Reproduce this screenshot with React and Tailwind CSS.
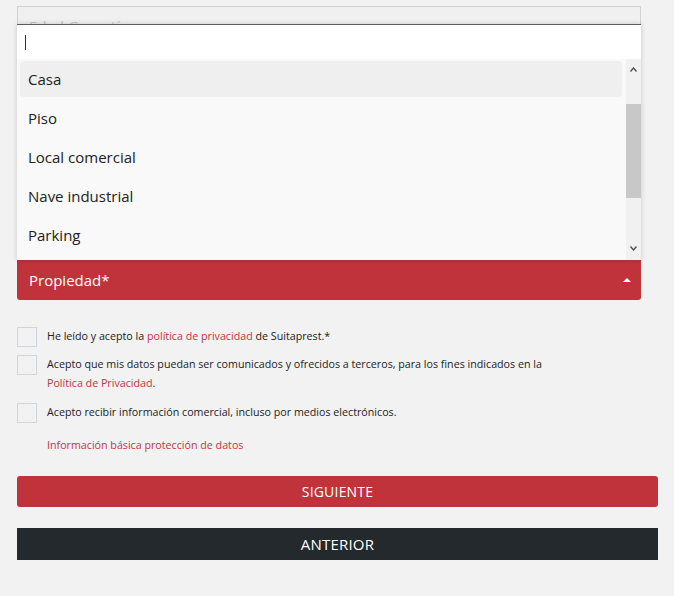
import React from "react";

const options = ["Casa", "Piso", "Local comercial", "Nave industrial", "Parking"];

function Chevron({ up }) {
  return (
    <svg width="7" height="5" viewBox="0 0 7 5" className="block">
      <path
        d={up ? "M0.5 4.5 L3.5 1 L6.5 4.5" : "M0.5 0.5 L3.5 4 L6.5 0.5"}
        fill="none"
        stroke="#505050"
        strokeWidth="1.4"
      />
    </svg>
  );
}

function Checkbox() {
  return <div className="w-[20px] h-[20px] shrink-0 border border-[#cdd6de] bg-[#f2f2f2]" />;
}

export default function App() {
  return (
    <div
      className="min-h-[596px] w-full bg-[#f2f2f2] pl-[17px] pt-[6px]"
      style={{ fontFamily: '"Open Sans", "Noto Sans", sans-serif' }}
    >
      <div className="w-[641px]">
        {/* field above the select, partly covered by the open list */}
        <div className="w-[624px] h-[40px] border border-[#c9d3dc] bg-[#f0f0f0] flex items-center pl-[11px]">
          <span className="text-[15px] text-[#c6c6c6]">Edad Garantía</span>
        </div>

        {/* select; its list opens upward over the fields above */}
        <div className="relative w-[624px] mt-[214px]">
          <div className="absolute left-0 right-0 bottom-full h-[236px] border-t border-[#5c5c5c] bg-white shadow-[0_0_5px_rgba(0,0,0,0.18)] flex flex-col">
            <div className="h-[34px] flex items-center pl-[8px]">
              <div className="w-px h-[15px] bg-[#333]" />
            </div>
            <div className="flex-1 flex bg-[#f9f9f9]">
              <div className="flex-1 pl-[3px] pr-[4px] flex flex-col overflow-hidden">
                {options.map((o, i) => (
                  <div key={o} className="h-[39px] shrink-0 flex flex-col pt-[2px] pb-[1px]">
                    <div
                      className={
                        "flex-1 flex items-center pl-[8px] text-[15px] text-[#222] rounded-[4px] " +
                        (i === 0 ? "bg-[#efefef]" : "")
                      }
                    >
                      {o}
                    </div>
                  </div>
                ))}
              </div>
              <div className="w-[15px] bg-[#f1f1f1] flex flex-col items-center">
                <div className="h-[13px] flex items-end">
                  <Chevron up />
                </div>
                <div className="mt-[32px] w-full h-[94px] bg-[#c8c8c8]" />
                <div className="flex-1" />
                <div className="h-[14px] flex items-start">
                  <Chevron />
                </div>
              </div>
            </div>
          </div>

          {/* selected value bar */}
          <div className="h-[40px] bg-[#c0333b] rounded-b-[3px] flex items-center justify-between pl-[12px] pr-[10px]">
            <span className="text-[15px] text-white">Propiedad*</span>
            <svg width="8" height="4" viewBox="0 0 8 4">
              <path d="M0 4 L4 0 L8 4 Z" fill="#fff" />
            </svg>
          </div>
        </div>

        {/* consent checkboxes */}
        <div className="mt-[27px] text-[10.7px] leading-[19px] text-[#222]">
          <div className="flex gap-[10px] items-start">
            <Checkbox />
            <p>
              He leído y acepto la <span className="text-[#c8333e]">política de privacidad</span> de Suitaprest.*
            </p>
          </div>
          <div className="flex gap-[10px] items-start mt-[8px]">
            <Checkbox />
            <p>
              Acepto que mis datos puedan ser comunicados y ofrecidos a terceros, para los fines indicados en la
              <br />
              <span className="text-[#c8333e]">Política de Privacidad</span>.
            </p>
          </div>
          <div className="flex gap-[10px] items-start mt-[10px]">
            <Checkbox />
            <p>Acepto recibir información comercial, incluso por medios electrónicos.</p>
          </div>
          <p className="pl-[30px] mt-[13px] text-[#c8333e]">Información básica protección de datos</p>
        </div>

        <button className="mt-[21px] w-full h-[31px] bg-[#c0333b] rounded-[3px] text-white text-[14px] tracking-[0.2px]">
          SIGUIENTE
        </button>
        <button className="mt-[21px] w-full h-[32px] bg-[#23292d] text-white text-[15px] tracking-[0.2px]">
          ANTERIOR
        </button>
      </div>
    </div>
  );
}
